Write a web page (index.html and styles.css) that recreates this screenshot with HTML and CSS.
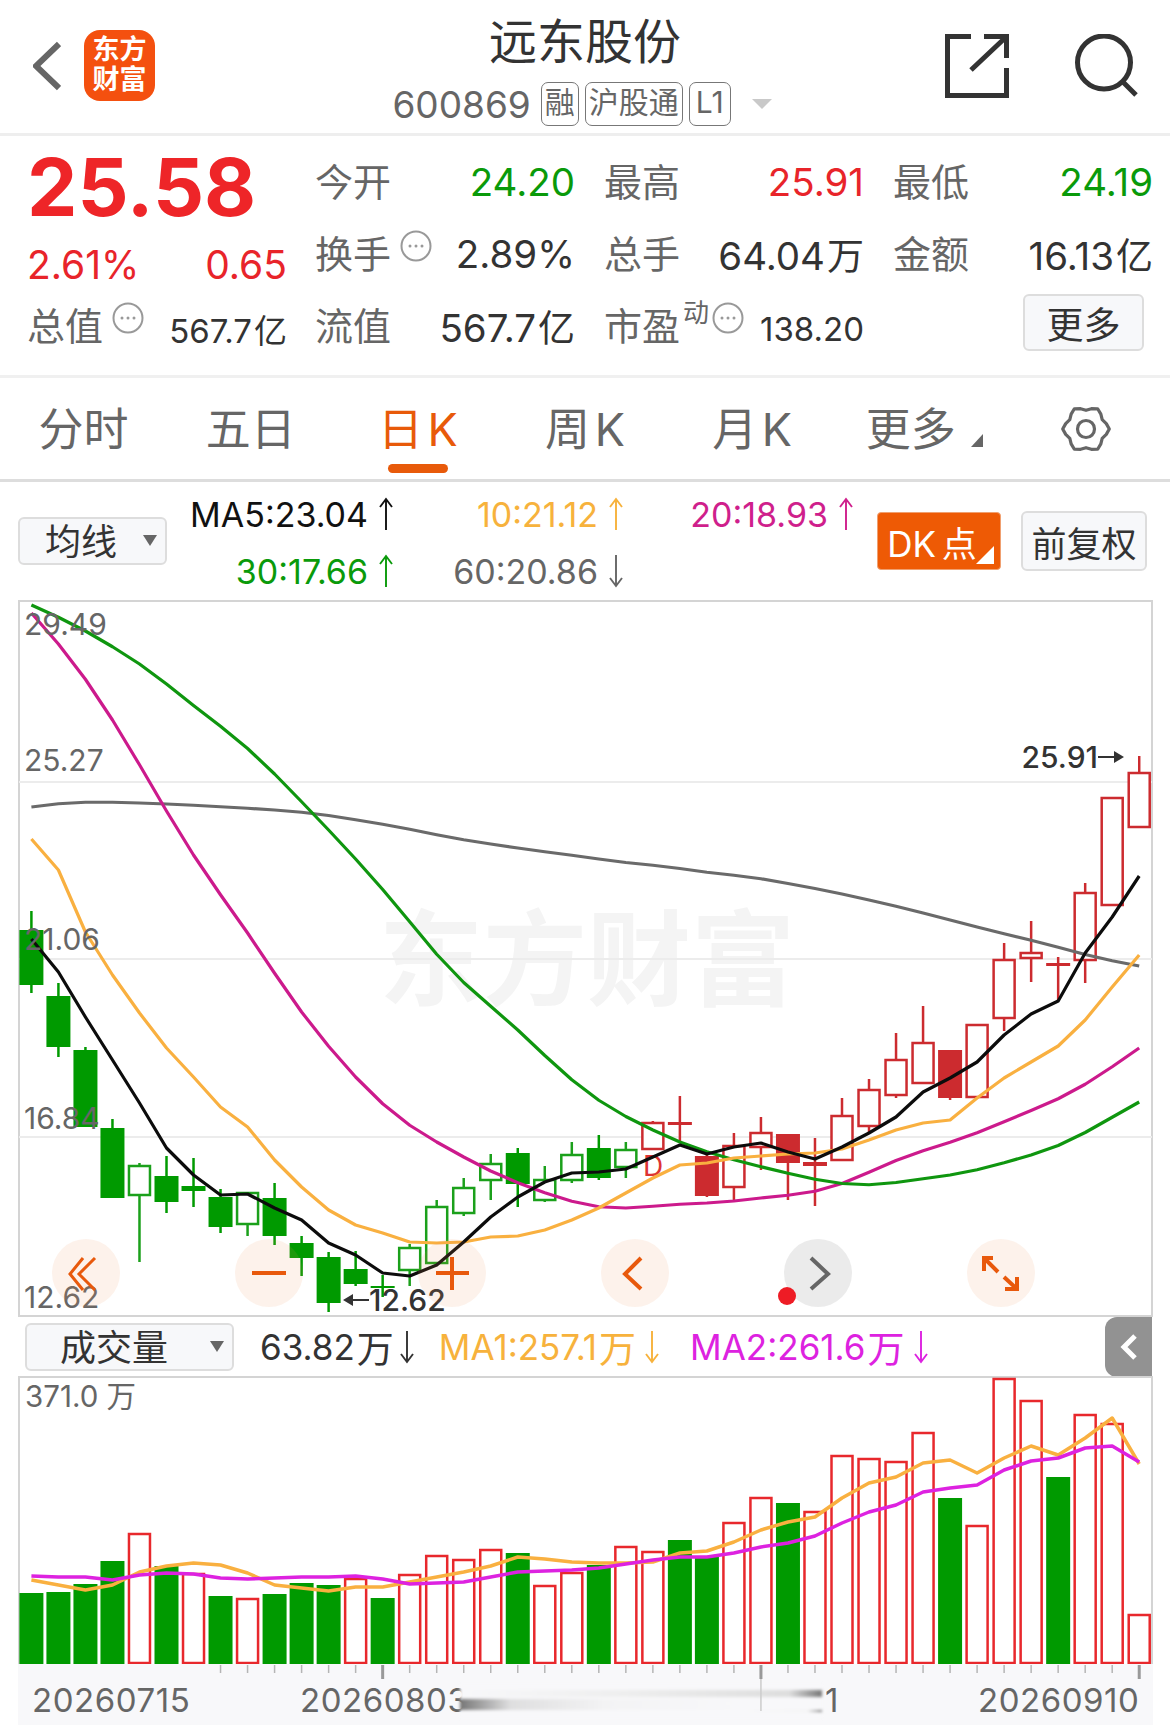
FILE: index.html
```html
<!DOCTYPE html>
<html lang="zh-CN">
<head>
    <meta charset="UTF-8">
    <meta name="viewport" content="width=device-width, initial-scale=1.0">
    <title>远东股份</title>
    <link rel="stylesheet" href="styles.css">
</head>
<body>
    <svg class="sprites" width="0" height="0">
        <symbol id="arrow-up" viewBox="0 0 16 34"><path d="M8 33V2M2 10L8 2L14 10"/></symbol>
        <symbol id="arrow-down" viewBox="0 0 16 34"><path d="M8 1V32M2 24L8 32L14 24"/></symbol>
        <symbol id="more-dots" viewBox="0 0 32 32"><circle cx="16" cy="16" r="14.5"/><circle class="dot" cx="10" cy="16" r="1.5"/><circle class="dot" cx="16" cy="16" r="1.5"/><circle class="dot" cx="22" cy="16" r="1.5"/></symbol>
        <symbol id="peak-right" viewBox="0 0 26 14"><path d="M0 6H16V1L26 7L16 13V8H0Z"/></symbol>
        <symbol id="peak-left" viewBox="0 0 26 14"><path d="M26 6H10V1L0 7L10 13V8H26Z"/></symbol>
    </svg>

    <header class="header">
        <div class="header-left">
            <svg class="back-icon" viewBox="0 0 28 50"><path d="M26 3L3 25L26 47"/></svg>
            <div class="logo">东方<br>财富</div>
        </div>
        <div class="header-center">
            <div class="stock-name">远东股份</div>
            <div class="stock-sub">
                <span class="stock-code">600869</span>
                <span class="tag">融</span>
                <span class="tag">沪股通</span>
                <span class="tag tag-wide">L1</span>
                <span class="sub-caret"></span>
            </div>
        </div>
        <div class="header-right">
            <svg class="share-icon" viewBox="0 0 64 64"><path d="M26 2.5H2.5V61.5H61.5V34M39 2.5H61.5V24M26 36L60 4"/></svg>
            <svg class="search-icon" viewBox="0 0 64 64"><circle cx="29" cy="28.5" r="26.5"/><path d="M48 48L61 61"/></svg>
        </div>
    </header>

    <section class="quote">
        <div class="quote-main">
            <div class="price">25.58</div>
            <div class="change"><span>2.61%</span><span>0.65</span></div>
            <div class="cell">
                <span class="label">总值<svg class="dots-icon"><use href="#more-dots"/></svg></span>
                <span class="value small">567.7<span class="unit">亿</span></span>
            </div>
        </div>
        <div class="quote-grid">
            <div class="cell"><span class="label">今开</span><span class="value green">24.20</span></div>
            <div class="cell"><span class="label">最高</span><span class="value red">25.91</span></div>
            <div class="cell"><span class="label">最低</span><span class="value green">24.19</span></div>
            <div class="cell"><span class="label">换手<svg class="dots-icon"><use href="#more-dots"/></svg></span><span class="value">2.89%</span></div>
            <div class="cell"><span class="label">总手</span><span class="value">64.04<span class="unit">万</span></span></div>
            <div class="cell"><span class="label">金额</span><span class="value">16.13<span class="unit">亿</span></span></div>
            <div class="cell"><span class="label">流值</span><span class="value">567.7<span class="unit">亿</span></span></div>
            <div class="cell">
                <span class="label">市盈<sup class="pe-mark">动</sup><svg class="dots-icon tight"><use href="#more-dots"/></svg></span>
                <span class="value small">138.20</span>
            </div>
            <div class="cell more-cell"><button class="btn more-btn">更多</button></div>
        </div>
    </section>

    <nav class="tabs">
        <div class="tab">分时</div>
        <div class="tab">五日</div>
        <div class="tab active">日 K</div>
        <div class="tab">周 K</div>
        <div class="tab">月 K</div>
        <div class="tab tab-more">更多<span class="tab-caret"></span></div>
        <div class="tab">
            <svg class="gear-icon" viewBox="-26 -24 52 48">
                <polygon points="0,-18.7 5.4,-20.3 11.65,-20.2 14.85,-14.85 16.2,-9.35 20.3,-5.4 23.3,0 20.3,5.4 16.2,9.35 14.85,14.85 11.65,20.2 5.4,20.3 0,18.7 -5.4,20.3 -11.65,20.2 -14.85,14.85 -16.2,9.35 -20.3,5.4 -23.3,0 -20.3,-5.4 -16.2,-9.35 -14.85,-14.85 -11.65,-20.2 -5.4,-20.3"/>
                <circle r="8.5"/>
            </svg>
        </div>
    </nav>

    <section class="ma-row">
        <div class="select ma-select">均线<span class="select-caret"></span></div>
        <div class="ma-grid">
            <div class="ma-item black">MA5:23.04<svg class="arrow"><use href="#arrow-up"/></svg></div>
            <div class="ma-item orange">10:21.12<svg class="arrow"><use href="#arrow-up"/></svg></div>
            <div class="ma-item pink">20:18.93<svg class="arrow"><use href="#arrow-up"/></svg></div>
            <div class="ma-item green">30:17.66<svg class="arrow"><use href="#arrow-up"/></svg></div>
            <div class="ma-item gray">60:20.86<svg class="arrow"><use href="#arrow-down"/></svg></div>
        </div>
        <button class="btn dk-btn">DK 点<span class="dk-corner"></span></button>
        <button class="btn fq-btn">前复权</button>
    </section>

    <section class="kline">
        <div class="kline-frame"></div>
        <div class="watermark">东方财富</div>
        <span class="d-mark">D</span>
        <svg id="kline-chart" class="chart-svg" width="1170" height="717" viewBox="0 600 1170 717"></svg>

        <span class="axis-label axis-1">29.49</span>
        <span class="axis-label axis-2">25.27</span>
        <span class="axis-label axis-3">21.06</span>
        <span class="axis-label axis-4">16.84</span>
        <span class="axis-label axis-5">12.62</span>
        <span class="peak-label high">25.91<svg class="peak-arrow"><use href="#peak-right"/></svg></span>
        <span class="peak-label low"><svg class="peak-arrow"><use href="#peak-left"/></svg>12.62</span>

        <div class="controls">
            <div class="control"><svg viewBox="0 0 68 68"><path d="M31 19L18 35L31 51M43 19L27 35L43 51"/></svg></div>
            <div class="control bold"><svg viewBox="0 0 68 68"><path d="M17 34H51"/></svg></div>
            <div class="control bold"><svg viewBox="0 0 68 68"><path d="M18 34H51M34 18V51"/></svg></div>
            <div class="control bold"><svg viewBox="0 0 68 68"><path d="M40 19L24 35L40 50"/></svg></div>
            <div class="control bold idle"><svg viewBox="0 0 68 68"><path d="M27 19L44 35L27 50"/></svg></div>
            <div class="control bold"><svg viewBox="0 0 68 68"><path d="M26 19H17V32M17 19L31 33M50 38V50H38M50 50L37 38"/></svg></div>
        </div>
        <span class="red-dot"></span>
    </section>

    <section class="vol-row">
        <div class="select vol-select">成交量<span class="select-caret"></span></div>
        <div class="vol-item dark">63.82<span class="unit">万</span><svg class="arrow"><use href="#arrow-down"/></svg></div>
        <div class="vol-item orange">MA1:257.1<span class="unit">万</span><svg class="arrow"><use href="#arrow-down"/></svg></div>
        <div class="vol-item violet">MA2:261.6<span class="unit">万</span><svg class="arrow"><use href="#arrow-down"/></svg></div>
        <div class="collapse"><svg viewBox="0 0 20 30"><path d="M16 4L5 15L16 26"/></svg></div>
    </section>

    <section class="volume">
        <svg id="volume-chart" class="chart-svg" width="1170" height="288" viewBox="0 1376 1170 288"></svg>
        <span class="vol-max">371.0 万</span>
    </section>

    <section class="dates">
        <span class="date date-1">20260715</span>
        <span class="date date-2">20260803</span>
        <span class="date date-3">1</span>
        <span class="date date-4">20260910</span>
        <div class="smear"></div>
        <svg id="date-ticks" class="chart-svg" width="1170" height="61" viewBox="0 1664 1170 61"></svg>
    </section>

    <script src="chart.js"></script>
</body>
</html>
```

FILE: styles.css
```css
* {
    box-sizing: border-box;
}
html, body {
    margin: 0;
    padding: 0;
}
body {
    width: 1170px;
    height: 1725px;
    overflow: hidden;
    background-color: #fff;
    color: #333;
    font-family: Inter, "Noto Sans CJK SC", sans-serif;
}
.sprites {
    position: absolute;
}
.green { color: #0a9a0a; }
.red { color: #e8242a; }
.black { color: #111; }
.orange { color: #f7b23c; }
.pink { color: #cf1f8c; }
.gray { color: #666; }
.dark { color: #333; }
.violet { color: #dd22e0; }

/* header */
.header {
    display: grid;
    grid-template-columns: 1fr auto 1fr;
    height: 136px;
    border-bottom: 3px solid #eee;
}
.header-left {
    display: flex;
    align-items: center;
    padding: 0 0 2px 33px;
}
.back-icon {
    width: 28px;
    height: 50px;
    fill: none;
    stroke: #666;
    stroke-width: 6;
}
.logo {
    width: 71px;
    height: 71px;
    margin-left: 23px;
    padding-top: 5px;
    border-radius: 16px;
    background-color: #f4500f;
    color: #fff;
    font-size: 27px;
    font-weight: 700;
    line-height: 30px;
    text-align: center;
}
.header-center {
    padding-top: 12px;
    text-align: center;
}
.stock-name {
    font-size: 48px;
    line-height: 60px;
    color: #333;
}
.stock-sub {
    display: flex;
    align-items: center;
    height: 44px;
    margin-top: 10px;
    padding-right: 6px;
}
.stock-code {
    margin-right: 10px;
    color: #666;
    font-size: 37px;
}
.tag {
    height: 44px;
    margin-right: 6px;
    padding: 0 3px;
    border: 1.5px solid #777;
    border-radius: 7px;
    color: #666;
    font-size: 30px;
    line-height: 39px;
}
.tag-wide {
    padding: 0 6px;
}
.sub-caret {
    width: 0;
    height: 0;
    margin: 0 0 0 15px;
    border-left: 10px solid transparent;
    border-right: 10px solid transparent;
    border-top: 10px solid #c9c9c9;
}
.header-right {
    display: flex;
    justify-content: flex-end;
    gap: 66px;
    padding: 34px 31px 0 0;
}
.share-icon, .search-icon {
    width: 64px;
    height: 64px;
    fill: none;
    stroke: #333;
    stroke-width: 5;
}

/* quote */
.quote {
    display: flex;
    height: 242px;
    padding: 10px 0 0 27px;
    border-bottom: 3px solid #f0f0f0;
}
.quote-main {
    width: 260px;
    margin-right: 28px;
}
.price {
    color: #ee2528;
    font-size: 80px;
    font-weight: 700;
    line-height: 82px;
}
.change {
    display: flex;
    justify-content: space-between;
    color: #e8242a;
    font-size: 39px;
    line-height: 74px;
}
.quote-grid {
    display: grid;
    grid-template-columns: repeat(3, 260px);
    grid-auto-rows: 72px;
    column-gap: 29px;
}
.cell {
    display: flex;
    justify-content: space-between;
    align-items: center;
}
.quote-main .cell {
    height: 48px;
}
.label {
    display: flex;
    align-items: center;
    margin-top: -6px;
    color: #666;
    font-size: 38px;
}
.value {
    color: #333;
    font-size: 38.5px;
}
.value.green { color: #0a9a0a; }
.value.red { color: #e8242a; }
.value.small {
    font-size: 33px;
    padding-top: 6px;
}
.unit {
    margin-left: 2px;
    font-size: 37px;
}
.value.small .unit {
    font-size: 33px;
}
.dots-icon {
    width: 32px;
    height: 32px;
    margin: -10px 0 0 9px;
    fill: none;
    stroke: #999;
    stroke-width: 2;
}
.dots-icon .dot, .dot {
    fill: #999;
    stroke: none;
}
.dots-icon.tight {
    margin-left: 3px;
}
.pe-mark {
    margin: -20px 0 0 3px;
    font-size: 26px;
    line-height: 30px;
}
.more-cell {
    justify-content: flex-end;
    padding: 0 9px 8px 0;
}
.btn {
    padding: 0;
    border: 2px solid #ddd;
    border-radius: 6px;
    background-color: #f7f8fa;
    color: #333;
    font-family: inherit;
    font-size: 37px;
}
.more-btn {
    width: 121px;
    height: 57px;
}

/* tabs */
.tabs {
    display: grid;
    grid-template-columns: repeat(7, 1fr);
    height: 104px;
    border-bottom: 3px solid #ddd;
}
.tab {
    position: relative;
    display: flex;
    justify-content: center;
    align-items: center;
    padding-bottom: 4px;
    color: #666;
    font-size: 45px;
    word-spacing: -8px;
}
.tab-more {
    padding-left: 10px;
}
.tab.active {
    color: #e85a0a;
}
.tab.active::after {
    content: "";
    position: absolute;
    left: 50%;
    bottom: 6px;
    width: 60px;
    height: 9px;
    margin-left: -30px;
    border-radius: 5px;
    background-color: #e85a0a;
}
.tab-caret {
    width: 0;
    height: 0;
    margin: 28px 0 0 15px;
    border-left: 12px solid transparent;
    border-bottom: 13px solid #666;
}
.gear-icon {
    width: 52px;
    height: 48px;
    margin-top: 4px;
    fill: none;
    stroke: #666;
    stroke-width: 3.2;
    stroke-linejoin: round;
}

/* ma row */
.ma-row {
    display: flex;
    align-items: center;
    height: 118px;
    padding-left: 18px;
}
.select {
    position: relative;
    height: 48px;
    border: 2px solid #ddd;
    border-radius: 6px;
    background-color: #f7f8fa;
    color: #333;
    font-size: 36px;
    line-height: 47px;
}
.select-caret {
    position: absolute;
    top: 16px;
    right: 8px;
    width: 0;
    height: 0;
    border-left: 7px solid transparent;
    border-right: 7px solid transparent;
    border-top: 11px solid #666;
}
.ma-select {
    width: 149px;
    padding-left: 25px;
}
.ma-grid {
    display: grid;
    grid-template-columns: 227px 230px 230px;
    grid-auto-rows: 57px;
    margin-top: 3px;
}
.ma-grid .green {
    grid-column: 1;
}
.ma-item, .vol-item {
    display: flex;
    justify-content: flex-end;
    align-items: center;
    gap: 10px;
    font-size: 34px;
}
.ma-item.green { color: #0a9a0a; }
.arrow {
    width: 16px;
    height: 34px;
    fill: none;
    stroke: currentColor;
    stroke-width: 1.9;
}
.dk-btn {
    position: relative;
    width: 124px;
    height: 58px;
    margin-left: 23px;
    padding-right: 14px;
    border: 1px solid #f0a070;
    border-radius: 4px;
    background-color: #ee5a05;
    color: #fff;
    font-size: 35px;
    word-spacing: -4px;
}
.dk-corner {
    position: absolute;
    right: 6px;
    bottom: 5px;
    width: 0;
    height: 0;
    border-left: 18px solid transparent;
    border-bottom: 18px solid #fff;
}
.fq-btn {
    width: 126px;
    height: 60px;
    margin-left: 20px;
    font-size: 35px;
}

/* kline */
.kline {
    position: relative;
    height: 717px;
}
.kline-frame {
    position: absolute;
    top: 0;
    left: 18px;
    right: 17px;
    bottom: 0;
    border: 2px solid #d4d4d4;
}
.chart-svg {
    position: absolute;
    top: 0;
    left: 0;
}
.watermark {
    position: absolute;
    top: 295px;
    left: 379px;
    color: #f4f4f4;
    font-size: 104px;
    font-weight: 700;
    line-height: 130px;
    white-space: nowrap;
}
.d-mark {
    position: absolute;
    top: 551px;
    left: 643px;
    color: #d33;
    font-size: 28px;
    line-height: 30px;
}
.axis-label {
    position: absolute;
    left: 24px;
    color: #666;
    font-size: 30px;
    line-height: 34px;
}
.axis-1 { top: 7px; }
.axis-2 { top: 143px; }
.axis-3 { top: 322px; }
.axis-4 { top: 501px; }
.axis-5 { top: 680px; }
.peak-label {
    position: absolute;
    display: flex;
    align-items: center;
    color: #333;
    font-size: 30px;
    font-weight: 500;
    line-height: 34px;
    white-space: nowrap;
}
.peak-label.high {
    top: 140px;
    right: 46px;
}
.peak-label.low {
    top: 683px;
    left: 343px;
}
.peak-arrow {
    width: 26px;
    height: 14px;
    fill: #333;
}
.controls {
    position: absolute;
    top: 639px;
    left: 52px;
    display: flex;
    gap: 115px;
}
.control {
    width: 68px;
    height: 68px;
    border-radius: 50%;
    background-color: rgba(240, 150, 90, 0.12);
}
.control svg {
    width: 68px;
    height: 68px;
    fill: none;
    stroke: #e8590c;
    stroke-width: 3;
}
.control.bold svg {
    stroke-width: 4;
}
.control.idle {
    background-color: rgba(120, 120, 120, 0.15);
}
.control.idle svg {
    stroke: #666;
}
.red-dot {
    position: absolute;
    top: 687px;
    left: 778px;
    width: 18px;
    height: 18px;
    border-radius: 50%;
    background-color: #ee1c25;
}

/* volume */
.vol-row {
    position: relative;
    display: flex;
    align-items: center;
    height: 59px;
    padding-left: 25px;
}
.vol-select {
    width: 209px;
    padding-left: 33px;
}
.vol-item {
    gap: 0;
    margin-left: 24px;
    font-size: 35px;
}
.vol-item .arrow {
    margin-left: 8px;
}
.vol-item.dark {
    margin-left: 26px;
}
.vol-item.dark .arrow {
    margin-left: 5px;
}
.vol-item.violet {
    margin-left: 30px;
}
.collapse {
    position: absolute;
    top: 0;
    right: 18px;
    display: flex;
    justify-content: center;
    align-items: center;
    width: 47px;
    height: 60px;
    border-radius: 12px 0 0 12px;
    background-color: #929292;
}
.collapse svg {
    width: 20px;
    height: 30px;
    fill: none;
    stroke: #fff;
    stroke-width: 5;
}
.volume {
    position: relative;
    height: 288px;
}
.volume::before {
    content: "";
    position: absolute;
    top: 0;
    left: 18px;
    right: 17px;
    bottom: 0;
    border: 2px solid #d4d4d4;
    border-bottom: 0;
}
.vol-max {
    position: absolute;
    top: 3px;
    left: 25px;
    color: #666;
    font-size: 29.5px;
    line-height: 34px;
}

/* dates */
.dates {
    position: relative;
    height: 61px;
}
.dates::before {
    content: "";
    position: absolute;
    top: 0;
    left: 18px;
    right: 17px;
    bottom: 0;
    background-color: #f8f8fa;
}
.date {
    position: absolute;
    top: 16px;
    color: #666;
    font-size: 33px;
    line-height: 40px;
    letter-spacing: 0.55px;
}
.date-1 { left: 32px; }
.date-2 { left: 300px; }
.date-3 { left: 825px; }
.date-4 { left: 978px; }
.smear {
    position: absolute;
    top: 20px;
    left: 460px;
    width: 362px;
    height: 34px;
    background:
        linear-gradient(to right, #777, rgba(205, 205, 205, 0.6) 14%, rgba(238, 238, 238, 0.5) 40%, transparent 80%) 0 15px / 100% 11px no-repeat,
        linear-gradient(to left, #777, #ddd 9%, #eee 55%, transparent) 0 6px / 100% 7px no-repeat,
        linear-gradient(to left, #777, #f3f3f3 4%, transparent 25%) 0 26px / 100% 2px no-repeat,
        #f8f8fa;
    filter: blur(1.5px);
}
```

FILE: chart.js
```js
const SVG_NS = 'http://www.w3.org/2000/svg';
const FIRST_X = 31.4;
const STEP_X = 27.02;

const GREEN = '#009a00';
const GREEN_LINE = '#1ba01b';
const RED = '#cc2b2f';
const VOL_RED = '#e8282c';

// 开收盘上沿, 下沿, 影线上, 影线下, 颜色, 实心
const candles = [
    [930, 985, 911, 993, 'g', 1], [996, 1047, 983, 1057, 'g', 1], [1050, 1127, 1047, 1127, 'g', 1],
    [1128, 1198, 1119, 1198, 'g', 1], [1165, 1196, 1163, 1262, 'g', 0], [1176, 1202, 1156, 1213, 'g', 1],
    [1186, 1191, 1158, 1207, 'g', 1], [1197, 1227, 1189, 1233, 'g', 1], [1192, 1225, 1192, 1236, 'g', 0],
    [1198, 1236, 1183, 1245, 'g', 1], [1243, 1258, 1236, 1276, 'g', 1], [1257, 1303, 1252, 1312, 'g', 1],
    [1269, 1284, 1251, 1286, 'g', 1], [1286, 1288, 1275, 1297, 'g', 1], [1247, 1271, 1244, 1286, 'g', 0],
    [1206, 1264, 1200, 1265, 'g', 0], [1187, 1214, 1178, 1216, 'g', 0], [1163, 1181, 1154, 1200, 'g', 0],
    [1153, 1184, 1148, 1207, 'g', 1], [1179, 1201, 1166, 1202, 'g', 0], [1154, 1181, 1142, 1183, 'g', 0],
    [1148, 1178, 1135, 1180, 'g', 1], [1149, 1168, 1142, 1178, 'g', 0], [1122, 1150, 1121, 1150, 'r', 0],
    [1122, 1125, 1096, 1143, 'r', 1], [1156, 1196, 1155, 1197, 'r', 1], [1145, 1188, 1133, 1202, 'r', 0],
    [1132, 1148, 1117, 1170, 'r', 0], [1134, 1163, 1134, 1200, 'r', 1], [1162, 1166, 1138, 1206, 'r', 1],
    [1115, 1161, 1098, 1161, 'r', 0], [1089, 1127, 1079, 1132, 'r', 0], [1059, 1096, 1033, 1098, 'r', 0],
    [1042, 1084, 1006, 1084, 'r', 0], [1050, 1098, 1050, 1100, 'r', 1], [1024, 1098, 1024, 1098, 'r', 0],
    [959, 1019, 943, 1031, 'r', 0], [952, 959, 921, 982, 'r', 0], [963, 966, 957, 1000, 'r', 1],
    [892, 961, 883, 983, 'r', 0], [797, 906, 797, 906, 'r', 0], [772, 828, 756, 828, 'r', 0]
];

const maLines = [
    { color: '#6a6a6a', width: 3.2, smooth: true, points: [807, 803, 802, 802, 803, 804, 805, 807, 808, 810, 812, 815, 820, 824, 829, 835, 840, 844, 848, 852, 855, 859, 863, 865, 868, 873, 875, 878, 884, 888, 894, 900, 906, 913, 920, 927, 934, 940, 947, 955, 961, 966] },
    { color: '#cc1a8c', width: 3.2, smooth: true, points: [613, 643, 677, 720, 763, 813, 855, 897, 930, 975, 1013, 1047, 1078, 1105, 1127, 1142, 1157, 1172, 1183, 1193, 1202, 1208, 1209, 1206, 1204, 1203, 1202, 1197, 1196, 1192, 1185, 1172, 1160, 1150, 1143, 1133, 1122, 1110, 1100, 1085, 1067, 1048] },
    { color: '#0f960f', width: 3.2, smooth: true, points: [605, 617, 630, 647, 663, 683, 707, 725, 748, 773, 802, 830, 858, 890, 920, 957, 983, 1007, 1028, 1057, 1080, 1102, 1117, 1130, 1143, 1152, 1160, 1167, 1173, 1180, 1184, 1186, 1183, 1178, 1176, 1170, 1163, 1155, 1147, 1133, 1117, 1102] },
    { color: '#f9b040', width: 3.2, points: [839, 870, 932, 975, 1013, 1048, 1077, 1107, 1127, 1160, 1187, 1210, 1225, 1233, 1242, 1243, 1242, 1237, 1236, 1230, 1220, 1208, 1193, 1178, 1165, 1163, 1158, 1156, 1154, 1153, 1149, 1140, 1130, 1123, 1120, 1098, 1078, 1062, 1046, 1020, 987, 955] },
    { color: '#0c0c0c', width: 3.2, points: [939, 972, 1017, 1060, 1103, 1148, 1175, 1195, 1194, 1208, 1220, 1243, 1255, 1273, 1276, 1265, 1242, 1217, 1197, 1182, 1173, 1172, 1169, 1157, 1145, 1154, 1147, 1143, 1152, 1159, 1147, 1133, 1117, 1092, 1078, 1062, 1035, 1014, 1001, 953, 917, 876] }
];

// 柱顶, g = 实心绿, r = 空心红
const volumes = [
    [1593, 'g'], [1592, 'g'], [1584, 'g'], [1561, 'g'], [1533, 'r'], [1566, 'g'], [1573, 'r'],
    [1596, 'g'], [1598, 'r'], [1594, 'g'], [1583, 'g'], [1585, 'g'], [1578, 'r'], [1598, 'g'],
    [1574, 'r'], [1555, 'r'], [1559, 'r'], [1549, 'r'], [1553, 'g'], [1585, 'r'], [1572, 'r'],
    [1565, 'g'], [1546, 'r'], [1551, 'r'], [1540, 'g'], [1557, 'g'], [1522, 'r'], [1497, 'r'],
    [1503, 'g'], [1511, 'r'], [1455, 'r'], [1458, 'r'], [1461, 'r'], [1432, 'r'], [1498, 'g'],
    [1525, 'r'], [1378, 'r'], [1400, 'r'], [1477, 'g'], [1414, 'r'], [1423, 'r'], [1614, 'r']
];

const volLines = [
    { color: '#f9b040', width: 3.5, points: [1580, 1585, 1590, 1585, 1572, 1566, 1563, 1565, 1573, 1585, 1588, 1591, 1587, 1587, 1582, 1577, 1572, 1566, 1557, 1559, 1562, 1563, 1563, 1562, 1553, 1551, 1542, 1530, 1522, 1517, 1498, 1483, 1477, 1463, 1460, 1473, 1458, 1446, 1455, 1438, 1418, 1464] },
    { color: '#dd22e0', width: 3.5, points: [1576, 1577, 1577, 1580, 1575, 1573, 1574, 1578, 1579, 1578, 1577, 1577, 1576, 1579, 1584, 1583, 1582, 1577, 1572, 1571, 1570, 1568, 1564, 1560, 1557, 1557, 1553, 1547, 1543, 1536, 1523, 1512, 1505, 1492, 1488, 1485, 1470, 1461, 1458, 1448, 1446, 1462] }
];

function xAt(i) {
    return FIRST_X + STEP_X * i;
}

function addShape(svg, name, attrs) {
    const el = document.createElementNS(SVG_NS, name);
    Object.keys(attrs).forEach(key => el.setAttribute(key, attrs[key]));
    svg.appendChild(el);
    return el;
}

function smoothed(values) {
    return values.map((y, i) => {
        if (i === 0 || i === values.length - 1) {
            return y;
        }
        return (values[i - 1] + 2 * y + values[i + 1]) / 4;
    });
}

function drawLine(svg, line) {
    const values = line.smooth ? smoothed(line.points) : line.points;
    const points = values.map((y, i) => xAt(i).toFixed(1) + ',' + y).join(' ');
    addShape(svg, 'polyline', {
        points: points,
        fill: 'none',
        stroke: line.color,
        'stroke-width': line.width,
        'stroke-linejoin': 'round'
    });
}

function drawKline() {
    const svg = document.getElementById('kline-chart');

    [782, 959, 1137].forEach(y => {
        addShape(svg, 'line', { x1: 19, x2: 1152, y1: y, y2: y, stroke: '#ececec', 'stroke-width': 2 });
    });

    candles.forEach((c, i) => {
        const x = xAt(i);
        const isGreen = c[4] === 'g';
        const solid = c[5] === 1;
        const color = isGreen ? (solid ? GREEN : GREEN_LINE) : RED;
        addShape(svg, 'line', { x1: x, x2: x, y1: c[2], y2: c[3], stroke: color, 'stroke-width': 2.5 });
        if (solid) {
            addShape(svg, 'rect', { x: x - 12, y: c[0], width: 24, height: c[1] - c[0], fill: color });
        } else {
            addShape(svg, 'rect', {
                x: x - 10.5,
                y: c[0] + 1,
                width: 21,
                height: c[1] - c[0] - 2,
                fill: '#fff',
                stroke: color,
                'stroke-width': 2.5
            });
        }
    });

    maLines.forEach(line => drawLine(svg, line));
}

function drawVolume() {
    const svg = document.getElementById('volume-chart');
    const base = 1664;

    volumes.forEach((v, i) => {
        const x = xAt(i);
        if (v[1] === 'g') {
            addShape(svg, 'rect', { x: x - 12, y: v[0], width: 24, height: base - v[0], fill: GREEN });
        } else {
            addShape(svg, 'rect', {
                x: x - 10.5,
                y: v[0] + 1,
                width: 21,
                height: base - v[0] - 2,
                fill: '#fff',
                stroke: VOL_RED,
                'stroke-width': 2.5
            });
        }
    });

    volLines.forEach(line => drawLine(svg, line));
}

function drawTicks() {
    const svg = document.getElementById('date-ticks');
    const bigTicks = [13, 27, 41];

    for (let i = 7; i < candles.length; i++) {
        const x = xAt(i);
        const big = bigTicks.includes(i);
        addShape(svg, 'line', {
            x1: x,
            x2: x,
            y1: 1665,
            y2: big ? 1679 : 1673,
            stroke: big ? '#999' : '#b5b5b5',
            'stroke-width': big ? 3 : 1.5
        });
    }
    addShape(svg, 'line', { x1: xAt(27), x2: xAt(27), y1: 1679, y2: 1711, stroke: '#ccc', 'stroke-width': 1.5 });
}

drawKline();
drawVolume();
drawTicks();
```
